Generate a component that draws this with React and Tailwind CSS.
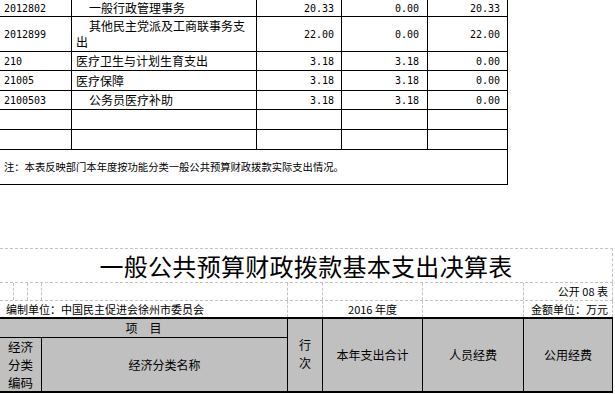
import React from "react";

const cjk = { fontFamily: '"Noto Sans CJK SC", "Noto Sans", sans-serif' };
const mono = { fontFamily: '"DejaVu Sans Mono", "Liberation Mono", monospace' };

const rows = [
  { code: "2012802", name: "一般行政管理事务", indent: true, a: "20.33", b: "0.00", c: "20.33", h: "h-[17px]" },
  { code: "2012899", name: "其他民主党派及工商联事务支出", indent: true, a: "22.00", b: "0.00", c: "22.00", h: "h-[35px]" },
  { code: "210", name: "医疗卫生与计划生育支出", indent: false, a: "3.18", b: "3.18", c: "0.00", h: "h-[19px]" },
  { code: "21005", name: "医疗保障", indent: false, a: "3.18", b: "3.18", c: "0.00", h: "h-[20px]" },
  { code: "2100503", name: "公务员医疗补助", indent: true, a: "3.18", b: "3.18", c: "0.00", h: "h-[19px]" },
  { code: "", name: "", indent: false, a: "", b: "", c: "", h: "h-[20px]" },
  { code: "", name: "", indent: false, a: "", b: "", c: "", h: "h-[20px]" },
];

function TopTable() {
  return (
    <div className="w-[508px] text-black">
      {rows.map((r, i) => (
        <div key={i} className={`flex ${r.h} border-b border-black`}>
          <div className="w-[72px] shrink-0 border-r border-black flex items-center pl-[4px] text-[10px]" style={mono}>
            {r.code}
          </div>
          <div className="w-[185px] shrink-0 border-r border-black flex items-center pl-[4px] pr-[2px] text-[12px] leading-[16px]" style={cjk}>
            <div className={r.indent ? "indent-[13px]" : ""}>{r.name}</div>
          </div>
          <div className="w-[85px] shrink-0 border-r border-black flex items-center justify-end pr-[7px] text-[10px]" style={mono}>
            {r.a}
          </div>
          <div className="w-[86px] shrink-0 border-r border-black flex items-center justify-end pr-[8px] text-[10px]" style={mono}>
            {r.b}
          </div>
          <div className="w-[80px] shrink-0 border-r border-black flex items-center justify-end pr-[7px] text-[10px]" style={mono}>
            {r.c}
          </div>
        </div>
      ))}
      <div className="h-[35px] border-b border-r border-black flex items-center pl-[4px] text-[10.3px]" style={cjk}>
        注：本表反映部门本年度按功能分类一般公共预算财政拨款实际支出情况。
      </div>
    </div>
  );
}

function Section() {
  const dash = "border-dashed border-[#c4c4c4]";
  return (
    <div className="mt-[63px] w-[613px] text-black" style={cjk}>
      {/* title row */}
      <div className={`h-[34px] border-t border-r ${dash} flex items-center justify-center text-[24px] leading-none tracking-[0.3px]`}>
        一般公共预算财政拨款基本支出决算表
      </div>
      {/* 公开 08 表 row */}
      <div className={`h-[18px] border-t ${dash} flex text-[11px]`}>
        <div className={`w-[14px] border-r ${dash}`}></div>
        <div className={`w-[14px] border-r ${dash}`}></div>
        <div className={`w-[14px] border-r ${dash}`}></div>
        <div className={`w-[246px] border-r ${dash}`}></div>
        <div className={`w-[35px] border-r ${dash}`}></div>
        <div className={`w-[100px] border-r ${dash}`}></div>
        <div className={`w-[101px] border-r ${dash}`}></div>
        <div className={`w-[89px] border-r ${dash} flex items-center justify-end pr-[4px]`}>公开 08 表</div>
      </div>
      {/* 编制单位 row */}
      <div className={`h-[17px] border-t ${dash} flex text-[11px]`}>
        <div className={`w-[288px] border-r ${dash} flex items-center pl-[6px] whitespace-nowrap`}>
          编制单位：中国民主促进会徐州市委员会
        </div>
        <div className={`w-[35px] border-r ${dash}`}></div>
        <div className={`w-[100px] border-r ${dash} flex items-center justify-center`}>2016 年度</div>
        <div className={`w-[101px] border-r ${dash}`}></div>
        <div className={`w-[89px] border-r ${dash} flex items-center justify-end pr-[4px] whitespace-nowrap`}>金额单位：万元</div>
      </div>
      {/* header */}
      <div className="flex h-[76px] bg-[#c0c0c0] border-t-2 border-b-2 border-r border-black text-[12px]">
        <div className="w-[288px] shrink-0 border-r border-black flex flex-col">
          <div className="h-[22px] border-b border-black flex items-center justify-center">项　目</div>
          <div className="flex flex-1">
            <div className="w-[42px] shrink-0 border-r border-black flex flex-col items-center justify-center leading-[18px] text-[12.5px]">
              <span>经济</span>
              <span>分类</span>
              <span>编码</span>
            </div>
            <div className="flex-1 flex items-center justify-center">经济分类名称</div>
          </div>
        </div>
        <div className="w-[35px] shrink-0 border-r border-black flex flex-col items-center justify-center leading-[18px] pb-[2px]">
          <span>行</span>
          <span>次</span>
        </div>
        <div className="w-[100px] shrink-0 border-r border-black flex items-center justify-center">本年支出合计</div>
        <div className="w-[101px] shrink-0 border-r border-black flex items-center justify-center">人员经费</div>
        <div className="flex-1 flex items-center justify-center">公用经费</div>
      </div>
    </div>
  );
}

export default function App() {
  return (
    <div className="w-[615px] h-[394px] overflow-hidden bg-white">
      <TopTable />
      <Section />
    </div>
  );
}
